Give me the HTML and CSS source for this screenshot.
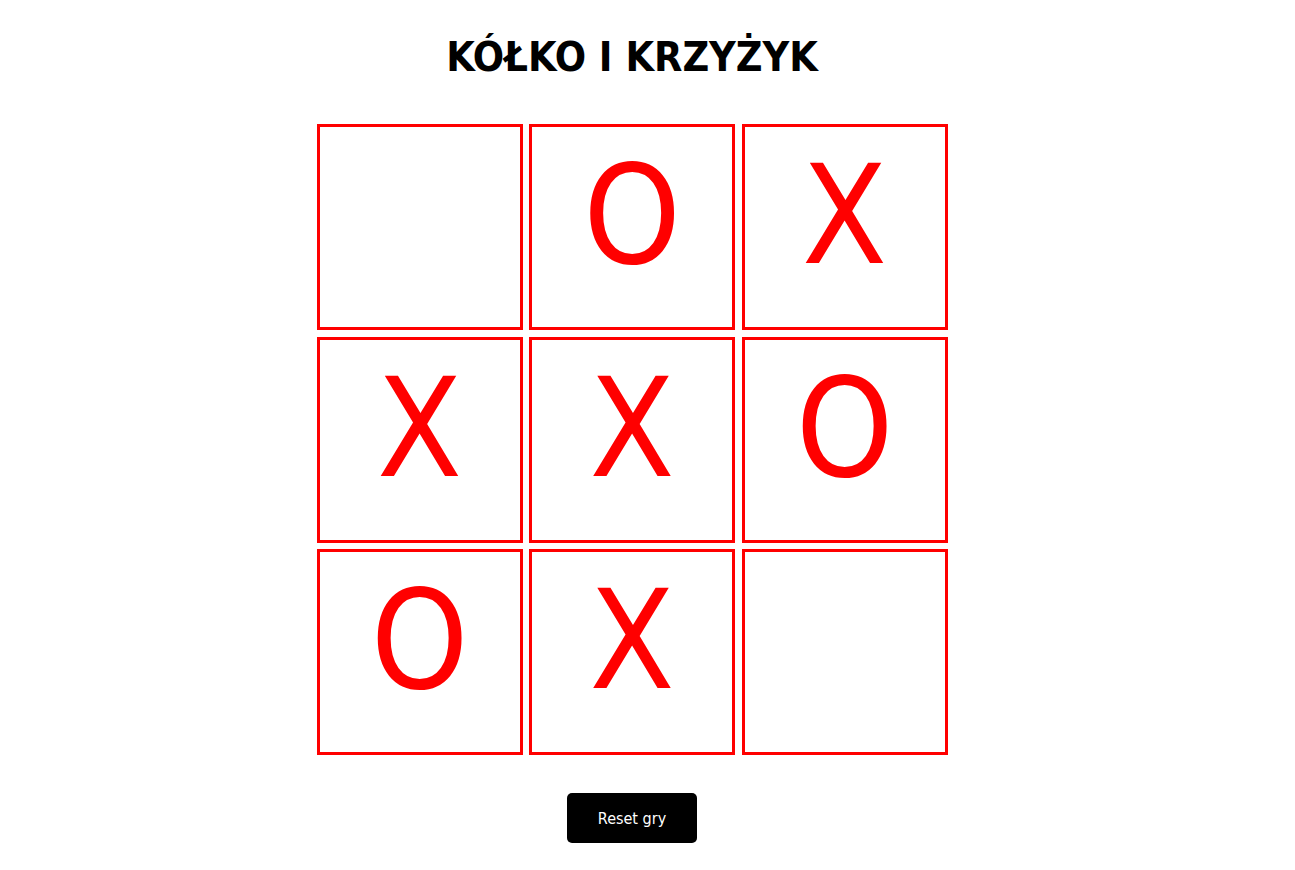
FILE: index.html
```html
<!DOCTYPE html>
<html lang="pl">
<head>
<meta charset="utf-8">
<title>Kółko i krzyżyk</title>
<link rel="stylesheet" href="styles.css">
</head>
<body>
<main class="page">
  <h1 class="title">KÓŁKO I KRZYŻYK</h1>
  <div class="board">
    <div class="cell"></div>
    <div class="cell">O</div>
    <div class="cell">X</div>
    <div class="cell">X</div>
    <div class="cell">X</div>
    <div class="cell">O</div>
    <div class="cell">O</div>
    <div class="cell">X</div>
    <div class="cell"></div>
  </div>
  <button class="reset">Reset gry</button>
</main>
</body>
</html>
```

FILE: styles.css
```css
html, body {
  margin: 0;
  padding: 0;
  background: #fff;
}
body {
  font-family: Tahoma, "DejaVu Sans Condensed", "DejaVu Sans", sans-serif;
}
.page {
  width: 1264px;
  display: flex;
  flex-direction: column;
  align-items: center;
}
.title {
  margin: 33px 0 0;
  font-size: 41px;
  line-height: 48px;
  font-weight: bold;
  color: #000;
}
.board {
  margin-top: 43px;
  display: grid;
  grid-template-columns: repeat(3, 206px);
  grid-auto-rows: 206px;
  gap: 6.5px;
}
.cell {
  box-sizing: border-box;
  border: 3px solid #ff0000;
  color: #ff0000;
  font-size: 138px;
  display: flex;
  align-items: center;
  justify-content: center;
  line-height: 1;
  padding-bottom: 22px;
}
.reset {
  margin-top: 38px;
  width: 130px;
  height: 50px;
  background: #000;
  color: #fff;
  border: none;
  border-radius: 5px;
  font-family: inherit;
  font-size: 16px;
}
```
